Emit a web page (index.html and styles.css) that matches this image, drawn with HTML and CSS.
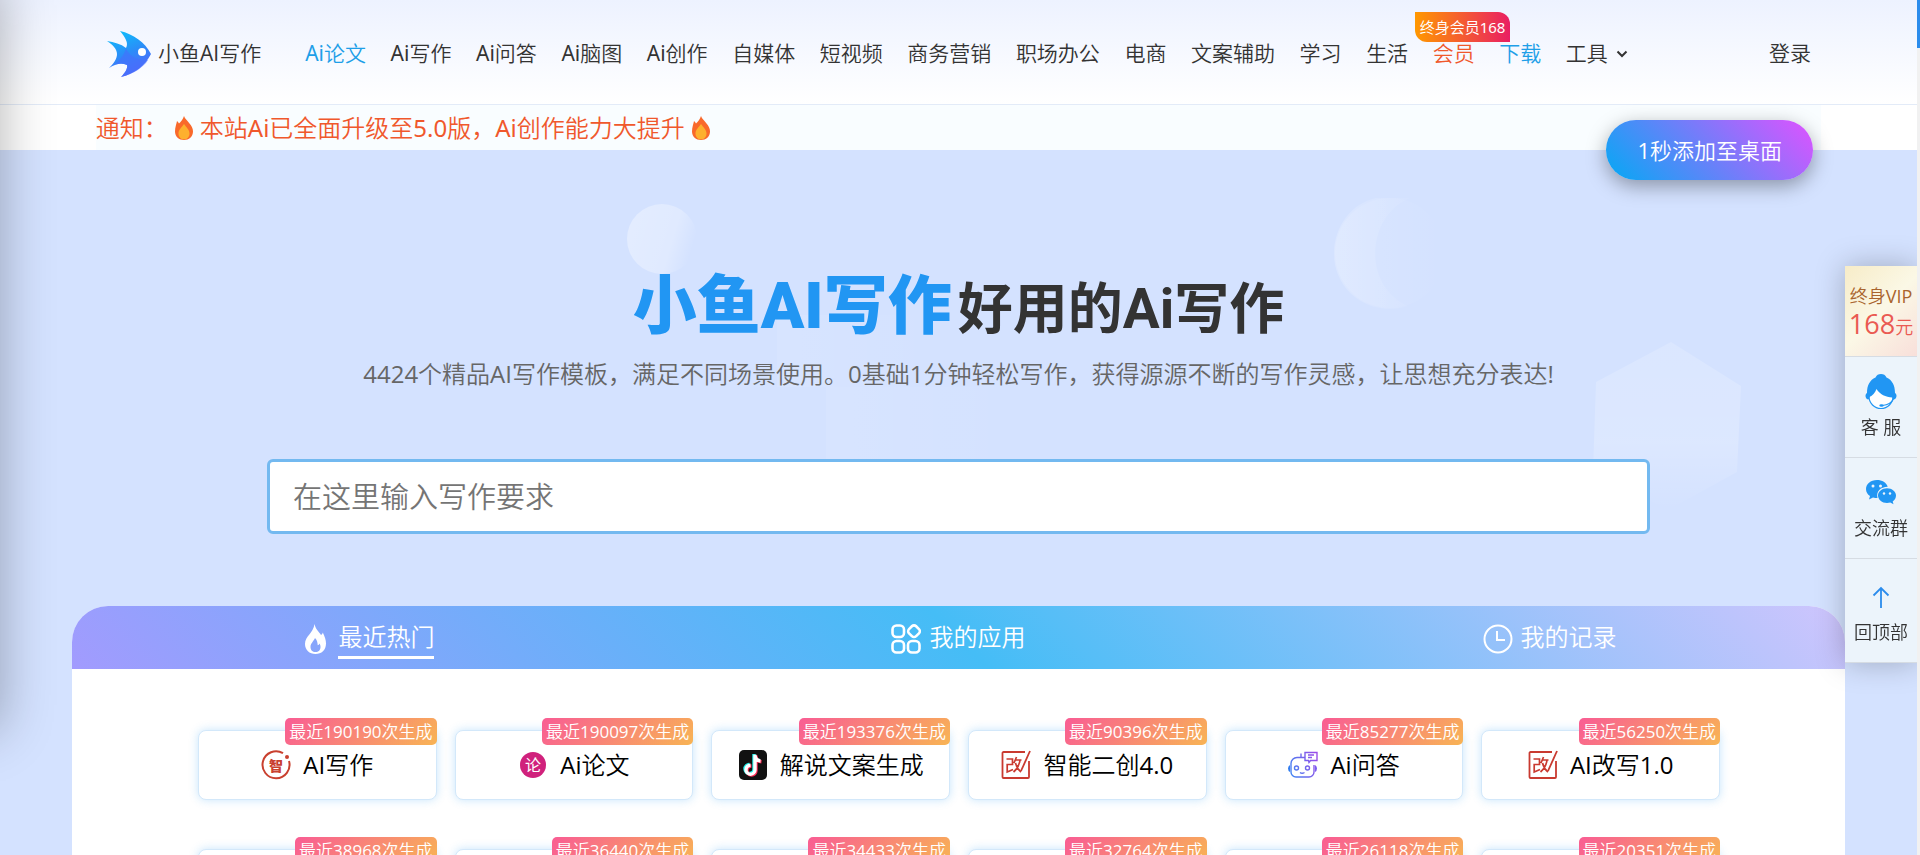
FILE: index.html
```html
<!DOCTYPE html>
<html lang="zh-CN">
<head>
<meta charset="utf-8">
<title>小鱼AI写作</title>
<link rel="stylesheet" href="styles.css">
</head>
<body>
<svg class="defs" aria-hidden="true">
  <defs>
    <symbol id="flame" viewBox="0 0 18 24">
      <path fill="#f9692b" d="M9 0c1 3 3 4 5.500 7.500C16.500 10 18 12 18 15.500 18 20.500 14 24 9 24S0 20.500 0 15.500C0 11 1.500 8 2 5c1 .6 1.600 1.600 2 2.500C6 5.500 8 3 9 0z"/>
      <path fill="#fdb02e" d="M9 8c2 3 5.500 5.500 5.500 9.500 0 3.500-2.300 5.800-5.500 5.800s-5.500-2.300-5.500-5.800C3.500 13.500 7 11 9 8z"/>
    </symbol>
    <symbol id="gai" viewBox="0 0 30 30">
      <path fill="none" stroke="#c93a30" stroke-width="1.800" stroke-linejoin="round" d="M24 2H2.500a1 1 0 0 0-1 1v24a1 1 0 0 0 1 1H27a1 1 0 0 0 1-1V11"/>
      <path fill="none" stroke="#c93a30" stroke-width="1.800" d="M29 1 20 21"/>
      <path fill="none" stroke="#c93a30" stroke-width="1.700" d="M5.500 9h6v5.500H6.200V22l5.800-2.500M15.500 7l-2.500 6M14.500 10h6M19 10c-.6 5-3 9-6.500 12M14.500 13c1 4 3 7 5.500 9"/>
    </symbol>
  </defs>
</svg>

<header class="header">
  <a class="brand" href="#">
    <svg class="brand-logo" viewBox="0 0 44 46" aria-hidden="true">
      <defs>
        <linearGradient id="fish" x1="0.200" y1="0" x2="0.600" y2="1">
          <stop offset="0" stop-color="#0cc0fb"/><stop offset=".5" stop-color="#2b8df8"/><stop offset="1" stop-color="#5a62fb"/>
        </linearGradient>
      </defs>
      <path fill="url(#fish)" d="M13 0C26 3 38 11 44 23 38 35 27 43 14 46c4-4 7-9 6-12-5-2-10-2-18 3 5-5 8-9 8-14S6 14 0 10c7 1 14 3 19 7 3-5-1-11-6-17z"/>
      <path fill="#456ffb" opacity=".6" d="M19 17c3 8 11 13 22 12C36 37 26 43 14 46c4-4 7-9 6-12-4-2-8-2-13 0 5-4 10-9 12-17z"/>
      <circle cx="35" cy="21" r="4" fill="#fff"/>
    </svg>
    <span>小鱼AI写作</span>
  </a>
  <nav class="nav">
    <a class="active" href="#">Ai论文</a>
    <a href="#">Ai写作</a>
    <a href="#">Ai问答</a>
    <a href="#">Ai脑图</a>
    <a href="#">Ai创作</a>
    <a href="#">自媒体</a>
    <a href="#">短视频</a>
    <a href="#">商务营销</a>
    <a href="#">职场办公</a>
    <a href="#">电商</a>
    <a href="#">文案辅助</a>
    <a href="#">学习</a>
    <a href="#">生活</a>
    <a class="member" href="#">会员<span class="member-tag">终身会员168</span></a>
    <a class="active" href="#">下载</a>
    <a class="tools" href="#">工具
      <svg class="caret" viewBox="0 0 12 8" aria-hidden="true"><path d="M1.500 1.500 6 6l4.500-4.500" fill="none" stroke="currentColor" stroke-width="2"/></svg>
    </a>
  </nav>
  <a class="login" href="#">登录</a>
</header>

<div class="notice">
  <p class="notice-text"><span>通知：</span><svg class="flame" aria-hidden="true"><use href="#flame"/></svg><span>本站Ai已全面升级至5.0版，Ai创作能力大提升</span><svg class="flame" aria-hidden="true"><use href="#flame"/></svg></p>
</div>
<button class="add-desktop" type="button">1秒添加至桌面</button>

<main class="hero">
  <svg class="shapes" viewBox="0 0 1917 500" aria-hidden="true">
    <defs>
      <linearGradient id="ball" x1="0" y1=".3" x2="1" y2=".6"><stop offset="0" stop-color="#fff" stop-opacity=".36"/><stop offset=".65" stop-color="#fff" stop-opacity=".28"/><stop offset=".95" stop-color="#fff" stop-opacity="0"/></linearGradient>
      <linearGradient id="moon" x1="0" y1="0" x2="1" y2="0"><stop offset="0" stop-color="#fff" stop-opacity=".18"/><stop offset="1" stop-color="#fff" stop-opacity=".04"/></linearGradient>
      <linearGradient id="soft" x1="0" y1="0" x2="1" y2="0"><stop offset="0" stop-color="#fff" stop-opacity=".08"/><stop offset="1" stop-color="#fff" stop-opacity="0"/></linearGradient>
      <linearGradient id="hex" x1="0" y1="0" x2="0" y2="1"><stop offset="0" stop-color="#fff" stop-opacity=".16"/><stop offset=".6" stop-color="#fff" stop-opacity=".2"/><stop offset="1" stop-color="#fff" stop-opacity="0"/></linearGradient>
      <linearGradient id="fade" x1="0" y1="0" x2="1" y2="0"><stop offset="0" stop-color="#fff" stop-opacity=".12"/><stop offset="1" stop-color="#fff" stop-opacity="0"/></linearGradient>
    </defs>
    <circle cx="662" cy="89" r="35" fill="url(#ball)"/>
    <path d="M1376 48h34c-44 18-48 88-2 108-6 2-12 3-17 3-34 0-57-26-57-55 0-28 18-51 42-56z" fill="url(#moon)"/>
    <circle cx="1390" cy="103" r="55" fill="url(#fade)"/>
    <path d="M777 165h160v72H777z" fill="url(#soft)"/>
    <path d="M826 237h190v72H826z" fill="url(#soft)"/>
    <path d="M1671 192 1741 236 1737 322 1668 360 1593 322 1596 232z" fill="url(#hex)"/>
  </svg>
  <h1 class="title"><strong>小鱼AI写作</strong>好用的Ai写作</h1>
  <p class="subtitle">4424个精品AI写作模板，满足不同场景使用。0基础1分钟轻松写作，获得源源不断的写作灵感，让思想充分表达!</p>
  <input class="prompt" type="text" placeholder="在这里输入写作要求" aria-label="写作要求">

  <section class="panel">
    <div class="tabs" role="tablist">
      <button class="tab selected" type="button" role="tab" aria-selected="true">
        <svg class="tab-icon" viewBox="0 0 30 30" aria-hidden="true"><path fill="#fff" fill-rule="evenodd" d="M14.500 0c1 5 4.500 8 6.500 11 1-.6 1.500-1.500 1.800-2.500C25 13 26 16 26 19.500 26 26 21.500 30 15.500 30S5 26 5 20C5 12 13.500 9 14.500 0zM15 14c-1 3-4.500 5-4.500 9 0 3 2 5 5 5s5-2 5-5c0-1.500-.4-2.500-1-3.500-.4 1-1 1.500-1.800 1.800C17.500 18 17 16 15 14z"/></svg>
        <span class="tab-label">最近热门</span>
      </button>
      <button class="tab" type="button" role="tab" aria-selected="false">
        <svg class="tab-icon" viewBox="0 0 30 30" fill="none" stroke="#fff" stroke-width="2.600" aria-hidden="true"><rect x="1.500" y="1.500" width="11.500" height="11.500" rx="4"/><rect x="1.500" y="17" width="11.500" height="11.500" rx="4"/><rect x="17" y="17" width="11.500" height="11.500" rx="4"/><rect x="18" y="2.200" width="10" height="10" rx="3" transform="rotate(45 23 7.200)"/></svg>
        <span class="tab-label">我的应用</span>
      </button>
      <button class="tab" type="button" role="tab" aria-selected="false">
        <svg class="tab-icon" viewBox="0 0 30 30" fill="none" stroke="#fff" stroke-width="2" aria-hidden="true"><circle cx="15" cy="15" r="13.500"/><path d="M14 7v9h8"/></svg>
        <span class="tab-label">我的记录</span>
      </button>
    </div>
    <div class="cards">
      <a class="card" href="#"><span class="count">最近190190次生成</span>
        <svg class="card-icon" viewBox="0 0 30 30" aria-hidden="true"><path fill="none" stroke="#c9402f" stroke-width="2" d="M22 3.200A13.500 13.500 0 1 0 28 11"/><circle cx="26" cy="7" r="2" fill="#c9402f"/><text class="seal-text" x="15" y="21" text-anchor="middle">智</text></svg>
        <span>AI写作</span></a>
      <a class="card" href="#"><span class="count">最近190097次生成</span>
        <svg class="card-icon" viewBox="0 0 30 30" aria-hidden="true"><circle cx="15" cy="15" r="13" fill="#d0217c"/><text class="disc-text" x="15" y="21" text-anchor="middle">论</text></svg>
        <span>Ai论文</span></a>
      <a class="card" href="#"><span class="count">最近193376次生成</span>
        <svg class="card-icon" viewBox="0 0 30 30" aria-hidden="true"><rect x="1" width="28" height="30" rx="5" fill="#111"/><g fill="none" stroke-width="3.400"><path stroke="#25f4ee" d="M16 4v15a4.500 4.500 0 1 1-4.500-4.500M16 5c.5 3.500 2.500 5 5.500 5.300"/><path stroke="#fe2c55" d="M18 5.500v15A4.500 4.500 0 1 1 13.500 16M18 6.500c.5 3.500 2.500 5 5.500 5.300"/><path stroke="#fff" d="M17 4.700v15a4.500 4.500 0 1 1-4.500-4.500M17 5.700c.5 3.500 2.500 5 5.500 5.300"/></g></svg>
        <span>解说文案生成</span></a>
      <a class="card" href="#"><span class="count">最近90396次生成</span>
        <svg class="card-icon" aria-hidden="true"><use href="#gai"/></svg>
        <span>智能二创4.0</span></a>
      <a class="card" href="#"><span class="count">最近85277次生成</span>
        <svg class="card-icon" viewBox="0 0 30 30" aria-hidden="true"><defs><linearGradient id="bot" gradientUnits="userSpaceOnUse" x1="0" y1="20" x2="30" y2="8"><stop offset="0" stop-color="#3f86f2"/><stop offset="1" stop-color="#9b4be8"/></linearGradient></defs><g fill="none" stroke="url(#bot)" stroke-width="1.400"><path d="M17 7.500H9a6 6 0 0 0-6 6V22a5 5 0 0 0 5 5h13a5 5 0 0 0 5-5v-7M13 7V3.500"/><circle cx="8.500" cy="18" r="2"/><circle cx="19.500" cy="18" r="2"/><path d="M12 22.500q2 1.500 4.500 0M17 2.500h12v8h-6.500L21 12.500l-.5-2H17zM20 5h6M20 7.500h4"/></g><path fill="#2f7cf0" d="M2 15v7q-2-1-2-3.500T2 15z"/><path fill="#7a5cf0" d="M27 15v7q2-1 2-3.500T27 15z"/></svg>
        <span>Ai问答</span></a>
      <a class="card" href="#"><span class="count">最近56250次生成</span>
        <svg class="card-icon" aria-hidden="true"><use href="#gai"/></svg>
        <span>AI改写1.0</span></a>
      <a class="card" href="#"><span class="count">最近38968次生成</span></a>
      <a class="card" href="#"><span class="count">最近36440次生成</span></a>
      <a class="card" href="#"><span class="count">最近34433次生成</span></a>
      <a class="card" href="#"><span class="count">最近32764次生成</span></a>
      <a class="card" href="#"><span class="count">最近26118次生成</span></a>
      <a class="card" href="#"><span class="count">最近20351次生成</span></a>
    </div>
  </section>
</main>

<aside class="dock">
  <a class="dock-item vip" href="#"><span>终身VIP</span><span class="price"><b>168</b>元</span></a>
  <a class="dock-item" href="#">
    <svg class="dock-icon" viewBox="0 0 32 36" aria-hidden="true"><circle cx="16" cy="22.500" r="12" fill="#fff" stroke="#2196f3" stroke-width="1.200"/><path fill="#2196f3" d="M10.500 3.500C11.500 1 13.500 0 16 0s4.500 1 5.500 3.500C27 6 30 11 30 19c1 .5 1.500 1.500 1.500 3s-1 3-2.500 3.500c-1 0-1.500-.8-1.500-2-7-.5-12.500-3-16-8.500-1.500 4-4 6.500-7 8 0 1.500-.5 2.500-1.500 2.500C1.500 25 .5 23.500.5 22S1 19.500 2 19C2 11 5 6 10.500 3.500z"/><path fill="none" stroke="#2196f3" stroke-width="1.200" d="M28.500 25c-2 4-6 6-11 6.500"/><ellipse cx="16.500" cy="31.500" rx="2.200" ry="1.300" fill="#2196f3"/></svg>
    <span>客 服</span></a>
  <a class="dock-item" href="#">
    <svg class="dock-icon" viewBox="0 0 32 36" aria-hidden="true"><path fill="#2196f3" d="M12 5C5.500 5 1 9 1 14c0 3 1.500 5.500 4 7l-1 3.500 4-2c1.500.4 3 .5 4.500.5-1.500-7 3-11 10.200-11.300C21.500 7.500 17 5 12 5z"/><path fill="#2196f3" d="M31 20.500c0-4-4-7.300-9-7.300s-9 3.300-9 7.300 4 7.500 9 7.500c1.200 0 2.300-.2 3.300-.5l3.200 1.800-.8-2.800c2-1.500 3.300-3.500 3.300-6z"/><g fill="#ecf4fb"><circle cx="8" cy="11" r="1.500"/><circle cx="15.500" cy="11" r="1.500"/><circle cx="19" cy="18.500" r="1.200"/><circle cx="25" cy="18.500" r="1.200"/></g></svg>
    <span>交流群</span></a>
  <a class="dock-item top" href="#">
    <svg class="dock-icon" viewBox="0 0 32 36" aria-hidden="true"><path fill="none" stroke="#2b8cec" stroke-width="1.800" d="M16 29V9M8.500 16.500 16 9l7.500 7.500"/></svg>
    <span>回顶部</span></a>
</aside>
<div class="drawer" aria-hidden="true"></div>
<div class="scroll-track" aria-hidden="true"><div class="scroll-thumb"></div></div>
</body>
</html>
```
FILE: styles.css
```css
* { box-sizing: border-box; }

html { height: 100%; overflow: hidden; }

body {
  margin: 0;
  height: 100%;
  padding-right: 3px;
  overflow: hidden;
  position: relative;
  background: #d4e2ff;
  color: #333;
  font-family: "Open Sans", "Noto Sans CJK SC DemiLight", "Noto Sans CJK SC", sans-serif;
  font-size: 21px;
  line-height: 1.5;
}

a { color: inherit; text-decoration: none; }
button { font: inherit; border: 0; background: none; padding: 0; cursor: pointer; }
p, h1 { margin: 0; }
.defs { position: absolute; width: 0; height: 0; }

/* Header */
.header {
  display: flex;
  align-items: center;
  height: 105px;
  padding: 4px 106px 0 107px;
  background: linear-gradient(#edf2ff, #fff);
  border-bottom: 1px solid #e3ebf8;
  white-space: nowrap;
}
.brand { display: flex; align-items: center; gap: 7px; margin-right: 44px; }
.brand-logo { width: 44px; height: 46px; }
.nav, .notice { font-family: "Noto Sans", "Noto Sans CJK SC DemiLight", "Noto Sans CJK SC", sans-serif; }
.nav { display: flex; flex: 1; justify-content: space-between; }
.nav .active { color: #1e9fe8; }
.member { position: relative; }
.nav .member { color: #f0582c; }
.member .member-tag {
  position: absolute;
  left: -18px;
  bottom: 28px;
  padding: 0 5px;
  font-size: 15px;
  line-height: 30px;
  color: #fff;
  background: linear-gradient(90deg, #ff9800, #e91e63);
  border-radius: 0 12px 0 12px;
}
.tools { display: flex; align-items: center; gap: 8px; }
.caret { width: 12px; height: 8px; }
.login { margin-left: 141px; }

/* Notice */
.notice { background: #fff; padding: 0 5%; }
.notice-text {
  display: flex;
  align-items: center;
  height: 45px;
  background: #f9fdff;
  color: #f0582c;
  font-size: 24px;
}
.flame { width: 18px; height: 24px; margin: 0 7px; }
.add-desktop {
  position: absolute;
  z-index: 2;
  top: 120px;
  right: 107px;
  padding: 0 31px;
  font-size: 22px;
  line-height: 60px;
  color: #fff;
  border-radius: 30px;
  background: linear-gradient(45deg, #03a9f4, #e052ff);
  box-shadow: 0 6px 20px rgba(0, 0, 0, .35);
}

/* Hero */
.hero {
  position: relative;
  display: flex;
  flex-direction: column;
  align-items: center;
  padding-top: 110px;
}
.shapes { position: absolute; top: 0; left: 0; width: 100%; }
.hero > :not(.shapes) { position: relative; }
.title {
  font-family: Roboto, "Noto Sans CJK SC", sans-serif;
  font-size: 55px;
  font-weight: 700;
  line-height: 94px;
  white-space: nowrap;
}
.title strong { margin-right: 6px; font-size: 64px; color: #2196f3; }
.subtitle { font-size: 24px; line-height: 36px; color: #666; white-space: nowrap; }
.prompt {
  width: 1383px;
  max-width: 90%;
  height: 75px;
  margin-top: 67px;
  padding: 0 23px;
  border: 3px solid #73b9f0;
  border-radius: 6px;
  background: #fff;
  font: inherit;
  font-size: 29px;
  outline: 0;
}
.prompt::placeholder { color: #757575; opacity: 1; }

/* Panel */
.panel {
  width: 92.5%;
  margin-top: 72px;
  background: #fff;
  border-radius: 36px 36px 0 0;
  overflow: hidden;
}
.tabs {
  display: grid;
  grid-template-columns: repeat(3, 1fr);
  height: 63px;
  background: linear-gradient(45deg, #a29bfe, #45bdf6 50%, #cfc5fd);
}
.tab {
  display: flex;
  align-items: center;
  justify-content: center;
  gap: 8px;
  padding-top: 2px;
  color: #fff;
  font-size: 24px;
}
.tab-icon { width: 30px; height: 30px; }
.tab-label { line-height: 38px; border-bottom: 3px solid transparent; }
.selected .tab-label { border-color: #fff; }
.cards {
  display: grid;
  grid-template-columns: repeat(6, 1fr);
  gap: 49px 18px;
  padding: 61px 125px 60px 126px;
}
.card {
  position: relative;
  display: flex;
  align-items: center;
  justify-content: center;
  gap: 12px;
  height: 70px;
  background: #fff;
  border: 1px solid #d3e8fa;
  border-radius: 8px;
  box-shadow: 0 0 10px rgba(33, 150, 243, .25);
  color: #000;
  font-size: 24px;
}
.card-icon { width: 30px; height: 30px; }
.count {
  position: absolute;
  top: -13px;
  right: -1px;
  padding: 0 4px;
  font-size: 17px;
  line-height: 27px;
  color: #fff;
  white-space: nowrap;
  border-radius: 5px;
  background: linear-gradient(135deg, #f95c94, #f8b454);
}
.seal-text { font: 900 14px "Noto Sans CJK SC", sans-serif; fill: #c9402f; }
.disc-text { font: 400 16px "Noto Sans CJK SC", sans-serif; fill: #fff; }

/* Side dock */
.dock {
  position: fixed;
  z-index: 3;
  top: 266px;
  right: 3px;
  width: 72px;
  background: #ecf4fb;
  box-shadow: 0 0 30px rgba(0, 0, 0, .25);
  font-size: 18px;
  line-height: 28px;
}
.dock-item {
  display: flex;
  flex-direction: column;
  align-items: center;
  justify-content: center;
  gap: 3px;
  height: 101px;
  border-bottom: 1px solid #d6dce3;
  white-space: nowrap;
}
.dock-icon { width: 32px; height: 36px; }
.vip {
  gap: 0;
  height: 91px;
  color: #a9642d;
  background: linear-gradient(135deg, #f7ecc8, #fbf8e6 50%, #f8dfda);
}
.top { height: 104px; padding-top: 4px; }
.price { color: #ea5a52; }
.price b { font-size: 27px; font-weight: 400; }

/* Closed drawer, parked beyond the left edge */
.drawer {
  position: fixed;
  z-index: 4;
  top: -20px;
  left: -300px;
  width: 300px;
  height: 750px;
  box-shadow: 0 0 50px rgba(0, 0, 0, .3);
}

.scroll-track { position: fixed; z-index: 5; top: 0; right: 0; bottom: 0; width: 3px; background: #f1f1f1; }
.scroll-thumb { height: 48px; background: #2b8cec; }
```
